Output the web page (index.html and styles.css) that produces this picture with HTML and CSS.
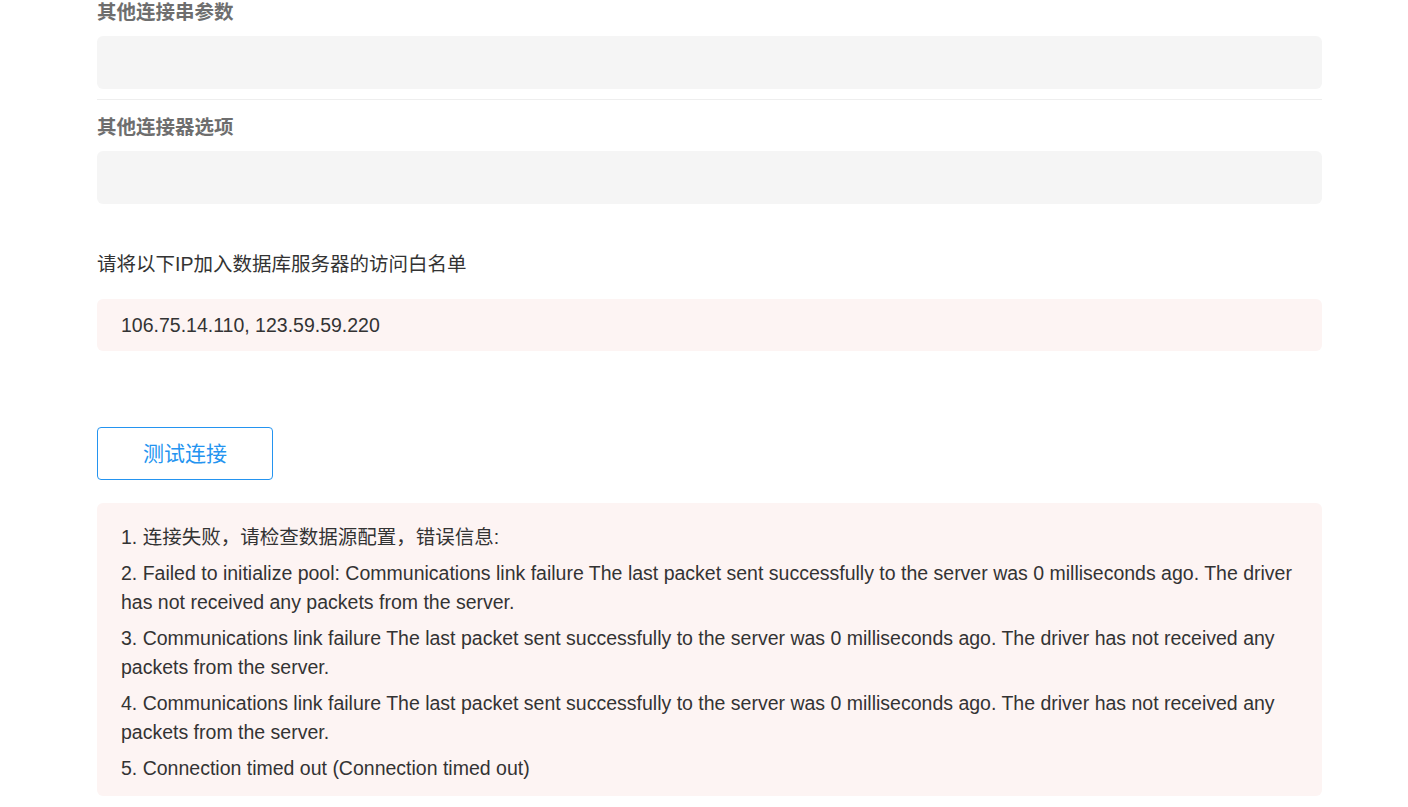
FILE: index.html
```html
<!DOCTYPE html>
<html lang="zh-CN">
<head>
  <meta charset="UTF-8" />
  <title>数据源配置</title>
  <link rel="stylesheet" href="styles.css">
</head>
<body>
  <div class="page">
    <div class="field">
      <div class="label">其他连接串参数</div>
      <div class="input"></div>
    </div>
    <div class="field">
      <div class="label">其他连接器选项</div>
      <div class="input"></div>
    </div>

    <p class="tip">请将以下IP加入数据库服务器的访问白名单</p>
    <div class="ip-box">106.75.14.110, 123.59.59.220</div>

    <button class="btn-test">测试连接</button>

    <div class="error-box">
      <p>1. 连接失败，请检查数据源配置，错误信息:</p>
      <p>2. Failed to initialize pool: Communications link failure The last packet sent successfully to the server was 0 milliseconds ago. The driver has not received any packets from the server.</p>
      <p>3. Communications link failure The last packet sent successfully to the server was 0 milliseconds ago. The driver has not received any packets from the server.</p>
      <p>4. Communications link failure The last packet sent successfully to the server was 0 milliseconds ago. The driver has not received any packets from the server.</p>
      <p>5. Connection timed out (Connection timed out)</p>
    </div>
  </div>
</body>
</html>
```

FILE: styles.css
```css
body {
  margin: 0;
  background: #fff;
  color: #333;
  font-family: "Liberation Sans", Arial, "Noto Sans CJK SC", sans-serif;
  font-size: 19.5px;
}

.page {
  width: 1225px;
  margin-left: 97px;
}

.field {
  padding-bottom: 10px;
}

.field + .field {
  border-top: 1px solid #eee;
  padding-top: 15px;
}

.label {
  font-size: 19.5px;
  font-weight: bold;
  color: #6e6e6e;
  line-height: 24px;
}

.input {
  margin-top: 12px;
  height: 53px;
  background: #f5f5f5;
  border-radius: 6px;
}

.tip {
  margin: 38px 0 0;
  line-height: 24px;
}

.ip-box {
  margin-top: 23px;
  padding: 14px 24px;
  line-height: 24px;
  background: #fdf4f3;
  border-radius: 6px;
}

.btn-test {
  display: block;
  margin-top: 76px;
  width: 176px;
  height: 53px;
  padding: 0 0 3px;
  background: #fff;
  border: 1px solid #2494f0;
  border-radius: 4px;
  color: #2494f0;
  font-family: inherit;
  font-size: 21px;
  cursor: pointer;
}

.error-box {
  margin-top: 23px;
  padding: 20px 24px 6px;
  background: #fdf4f3;
  border-radius: 6px;
}

.error-box p {
  margin: 0 0 7px;
  line-height: 29px;
}
```
